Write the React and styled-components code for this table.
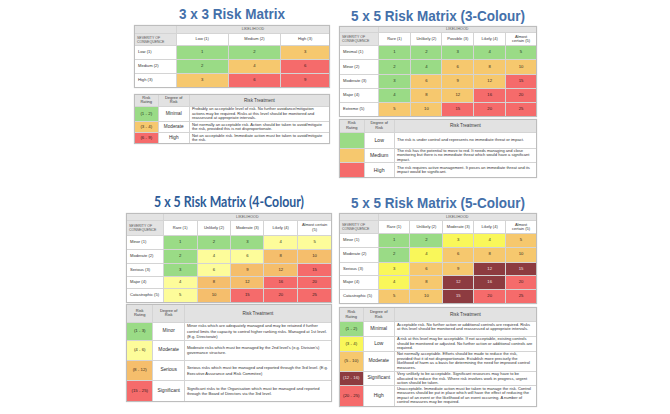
import React from "react";
import styled, { createGlobalStyle } from "styled-components";

const GlobalStyle = createGlobalStyle`
  * { box-sizing: border-box; }
  body {
    margin: 0;
    background: #fff;
    font-family: "Liberation Sans", Arial, sans-serif;
  }
`;

const TONES = {
  g: { bg: "#9adb86", fg: "#26331f" },
  a: { bg: "#f6c86e", fg: "#352a1c" },
  o: { bg: "#f5be6c", fg: "#352a1c" },
  r: { bg: "#f56b6b", fg: "#351c1c" },
  y: { bg: "#f9f75a", fg: "#34331c" },
  p: { bg: "#fdfc9a", fg: "#34331c" },
  d: { bg: "#8d3b40", fg: "#f5e2e2" },
};

const tracks = (arr) => arr.map((n) => `minmax(0, ${n}fr)`).join(" ");

const Page = styled.div`
  display: grid;
  grid-template-columns: 206px 198px;
  grid-template-rows: 192px auto;
  column-gap: 7px;
  padding-left: 126px;
  width: 670px;
  height: 414px;
  overflow: hidden;
`;

const Block = styled.div`
  display: flex;
  flex-direction: column;
  width: ${(p) => p.$width}px;
  margin-left: ${(p) => p.$indent || 0}px;
`;

const Title = styled.h2`
  margin: ${(p) => p.$top}px 0 ${(p) => p.$gap}px;
  font-family: ${(p) => (p.$alt ? '"Lato", "Liberation Sans", sans-serif' : '"Liberation Sans", Arial, sans-serif')};
  font-weight: bold;
  font-size: 15px;
  line-height: 15px;
  color: ${(p) => (p.$alt ? "#2d5b97" : "#4470aa")};
  text-align: center;
  white-space: nowrap;
  transform: scaleX(${(p) => p.$squeeze});
`;

const Table = styled.div`
  display: grid;
  grid-template-columns: ${(p) => p.$cols};
  grid-template-rows: ${(p) => p.$rows};
  gap: 1px;
  width: 100%;
  height: ${(p) => p.$height}px;
  margin-bottom: ${(p) => p.$after || 0}px;
  background: #d4d4d4;
  border: 1px solid #bdbdbd;
  box-shadow: 0 0 1px rgba(0, 0, 0, 0.2);
`;

const Cell = styled.div`
  display: flex;
  align-items: center;
  justify-content: center;
  overflow: hidden;
  min-height: 0;
  color: #333;
  font-size: 4.2px;
  line-height: 4.8px;
  text-align: center;
  white-space: pre-line;
`;

const HeadCell = styled(Cell)`
  grid-column: span ${(p) => p.$span || 1};
  background: #e3e3e3;
  color: #555;
  font-size: 3.6px;
  letter-spacing: 0.1px;
`;

const Corner = styled(Cell)`
  justify-content: flex-start;
  padding-left: 2px;
  background: #e3e3e3;
  color: #555;
  font-size: 3.5px;
  line-height: 4.1px;
  text-align: left;
`;

const ColHead = styled(Cell)`
  background: #fff;
  font-size: 4px;
`;

const RowHead = styled(Cell)`
  justify-content: flex-start;
  padding-left: 3px;
  background: #fff;
  font-size: 4.1px;
  text-align: left;
`;

const RiskCell = styled(Cell)`
  background: ${(p) => TONES[p.$tone].bg};
  color: ${(p) => TONES[p.$tone].fg};
  font-size: 4.2px;
`;

const LegendHead = styled(Cell)`
  background: #e2e2e2;
  color: #3c3c3c;
  font-size: ${(p) => p.$size || 4}px;
  line-height: ${(p) => (p.$size || 4) + 0.8}px;
`;

const Rating = styled(Cell)`
  background: ${(p) => TONES[p.$tone].bg};
  color: ${(p) => TONES[p.$tone].fg};
  font-size: 4.4px;
  white-space: nowrap;
`;

const Degree = styled(Cell)`
  background: #fff;
  color: #2e2e2e;
  font-size: ${(p) => p.$size}px;
  white-space: nowrap;
`;

const Treatment = styled(Cell)`
  justify-content: flex-start;
  align-items: ${(p) => (p.$top ? "flex-start" : "center")};
  padding: 0.5px 2px 0;
  background: #fff;
  color: #333;
  font-size: 4.05px;
  line-height: ${(p) => p.$lh}px;
  text-align: left;
  white-space: normal;
`;

function Matrix({ spec }) {
  return (
    <Table $cols={tracks(spec.colW)} $rows={tracks(spec.rowH)} $height={spec.height} $after={spec.after}>
      <HeadCell />
      <HeadCell $span={spec.cols.length}>LIKELIHOOD</HeadCell>
      <Corner>{"SEVERITY OF\nCONSEQUENCE"}</Corner>
      {spec.cols.map((c) => (
        <ColHead key={c}>{c}</ColHead>
      ))}
      {spec.rows.map((r, i) => (
        <React.Fragment key={r}>
          <RowHead>{r}</RowHead>
          {spec.tones[i].split("").map((t, j) => (
            <RiskCell key={j} $tone={t}>
              {(i + 1) * (j + 1)}
            </RiskCell>
          ))}
        </React.Fragment>
      ))}
    </Table>
  );
}

function Legend({ spec }) {
  return (
    <Table $cols={tracks(spec.colW)} $rows={tracks(spec.rowH)} $height={spec.height}>
      <LegendHead $size={4}>{"Risk\nRating"}</LegendHead>
      <LegendHead $size={4}>{"Degree of\nRisk"}</LegendHead>
      <LegendHead $size={4.6}>Risk Treatment</LegendHead>
      {spec.items.map((it) => (
        <React.Fragment key={it.degree}>
          <Rating $tone={it.tone}>{it.range}</Rating>
          <Degree $size={spec.degreeSize}>{it.degree}</Degree>
          <Treatment $lh={spec.lh} $top={spec.top}>{it.text}</Treatment>
        </React.Fragment>
      ))}
    </Table>
  );
}

const LIKELY5 = ["Rare (1)", "Unlikely (2)", "Possible (3)", "Likely (4)", "Almost\ncertain (5)"];
const LIKELY5B = ["Rare (1)", "Unlikely (2)", "Moderate (3)", "Likely (4)", "Almost\ncertain (5)"];
const SEVERE5 = ["Minor (1)", "Moderate (2)", "Serious (3)", "Major (4)", "Catastrophic (5)"];

const panels = [
  {
    title: "3 x 3 Risk Matrix",
    width: 196,
    indent: 8,
    top: 6,
    gap: 4,
    squeeze: 0.9,
    matrix: {
      cols: ["Low (1)", "Medium (2)", "High (3)"],
      rows: ["Low (1)", "Medium (2)", "High (3)"],
      tones: ["gga", "gar", "arr"],
      colW: [42, 52, 53, 49],
      rowH: [8, 12, 14, 14.5, 14.5],
      height: 63,
      after: 6,
    },
    legend: {
      colW: [23, 31, 142],
      rowH: [12, 16, 11, 11],
      height: 50,
      degreeSize: 4.7,
      lh: 4.5,
      items: [
        {
          tone: "g",
          range: "(1 - 2)",
          degree: "Minimal",
          text: "Probably an acceptable level of risk. No further avoidance/mitigation actions may be required. Risks at this level should be monitored and reassessed at appropriate intervals.",
        },
        {
          tone: "a",
          range: "(3 - 4)",
          degree: "Moderate",
          text: "Not normally an acceptable risk. Action should be taken to avoid/mitigate the risk, provided this is not disproportionate.",
        },
        {
          tone: "r",
          range: "(6 - 9)",
          degree: "High",
          text: "Not an acceptable risk. Immediate action must be taken to avoid/mitigate the risk.",
        },
      ],
    },
  },
  {
    title: "5 x 5 Risk Matrix (3-Colour)",
    width: 198,
    indent: 0,
    top: 8,
    gap: 3,
    squeeze: 0.9,
    matrix: {
      cols: LIKELY5,
      rows: ["Minimal (1)", "Minor (2)", "Moderate (3)", "Major (4)", "Extreme (5)"],
      tones: ["ggggg", "ggaaa", "gaaar", "gaarr", "aarrr"],
      colW: [39, 33, 31, 32, 32, 31],
      rowH: [6, 13, 14, 15, 14, 15, 14],
      height: 91,
      after: 2,
    },
    legend: {
      colW: [24, 30, 144],
      rowH: [13, 16, 15, 15],
      height: 59,
      degreeSize: 5.2,
      lh: 4.7,
      items: [
        { tone: "g", range: "", degree: "Low", text: "The risk is under control and represents no immediate threat or impact." },
        {
          tone: "a",
          range: "",
          degree: "Medium",
          text: "The risk has the potential to move to red.  It needs managing and close monitoring but there is no immediate threat which would have a significant impact.",
        },
        {
          tone: "r",
          range: "",
          degree: "High",
          text: "The risk requires active management.  It poses an immediate threat and its impact would be significant.",
        },
      ],
    },
  },
  {
    title: "5 x 5 Risk Matrix (4-Colour)",
    alt: true,
    width: 206,
    indent: 0,
    top: 2,
    gap: 4,
    squeeze: 0.82,
    matrix: {
      cols: ["Rare (1)", "Unlikely (2)", "Moderate (3)", "Likely (4)", "Almost certain\n(5)"],
      rows: SEVERE5,
      tones: ["gggpp", "gppoo", "gpoor", "poorr", "porrr"],
      colW: [37, 34, 34, 33, 34, 34],
      rowH: [7, 15, 14, 14, 14, 12, 14],
      height: 90,
      after: 1,
    },
    legend: {
      colW: [26, 31, 149],
      rowH: [18, 18, 20, 21, 21],
      height: 98,
      degreeSize: 4.9,
      lh: 5.4,
      items: [
        {
          tone: "g",
          range: "(1 - 3)",
          degree: "Minor",
          text: "Minor risks which are adequately managed and may be retained if further control limits the capacity to control higher ranking risks. Managed at 1st level. (E.g. Directorate)",
        },
        {
          tone: "p",
          range: "(4 - 6)",
          degree: "Moderate",
          text: "Moderate risks which must be managed by the 2nd level's (e.g. Division's) governance structure.",
        },
        {
          tone: "o",
          range: "(8 - 12)",
          degree: "Serious",
          text: "Serious risks which must be managed and reported through the 3rd level. (E.g. Executive Assurance and Risk Commitee)",
        },
        {
          tone: "r",
          range: "(15 - 25)",
          degree: "Significant",
          text: "Significant risks to the Organisation which must be managed and reported through the Board of Directors via the 3rd level.",
        },
      ],
    },
  },
  {
    title: "5 x 5 Risk Matrix (5-Colour)",
    width: 198,
    indent: 0,
    top: 3,
    gap: 3,
    squeeze: 0.9,
    matrix: {
      cols: LIKELY5B,
      rows: SEVERE5,
      tones: ["ggyya", "gyaaa", "yaadd", "yaddr", "aadrr"],
      colW: [39, 32, 33, 31, 32, 31],
      rowH: [7, 13, 14, 15, 14, 14, 14],
      height: 91,
      after: 3,
    },
    legend: {
      colW: [23, 31, 144],
      rowH: [14, 15, 15, 20, 15, 21],
      height: 100,
      degreeSize: 4.9,
      lh: 4.5,
      top: true,
      items: [
        {
          tone: "g",
          range: "(1 - 2)",
          degree: "Minimal",
          text: "Acceptable risk. No further action or additional controls are required. Risks at this level should be monitored and reassessed at appropriate intervals.",
        },
        {
          tone: "y",
          range: "(3 - 4)",
          degree: "Low",
          text: "A risk at this level may be acceptable. If not acceptable, existing controls should be monitored or adjusted. No further action or additional controls are required.",
        },
        {
          tone: "a",
          range: "(5 - 10)",
          degree: "Moderate",
          text: "Not normally acceptable. Efforts should be made to reduce the risk, provided that it id not disproportionate. Establish more precisely the likelihood of harm as a basis for determining the need for improved control measures.",
        },
        {
          tone: "d",
          range: "(12 - 16)",
          degree: "Significant",
          text: "Very unlikely to be acceptable. Significant resources may have to be allocated to reduce the risk. Where risk involves work in progress, urgent action should be taken.",
        },
        {
          tone: "r",
          range: "(20 - 25)",
          degree: "High",
          text: "Unacceptable. Immediate action must be taken to manage the risk. Control measures should be put in place which will have the effect of reducing the impact of an event or the likelihood of an event occurring. A number of control measures may be required.",
        },
      ],
    },
  },
];

export default function App() {
  return (
    <>
      <GlobalStyle />
      <Page>
        {panels.map((p) => (
          <Block key={p.title} $width={p.width} $indent={p.indent}>
            <Title $top={p.top} $gap={p.gap} $alt={p.alt} $squeeze={p.squeeze}>
              {p.title}
            </Title>
            <Matrix spec={p.matrix} />
            <Legend spec={p.legend} />
          </Block>
        ))}
      </Page>
    </>
  );
}
